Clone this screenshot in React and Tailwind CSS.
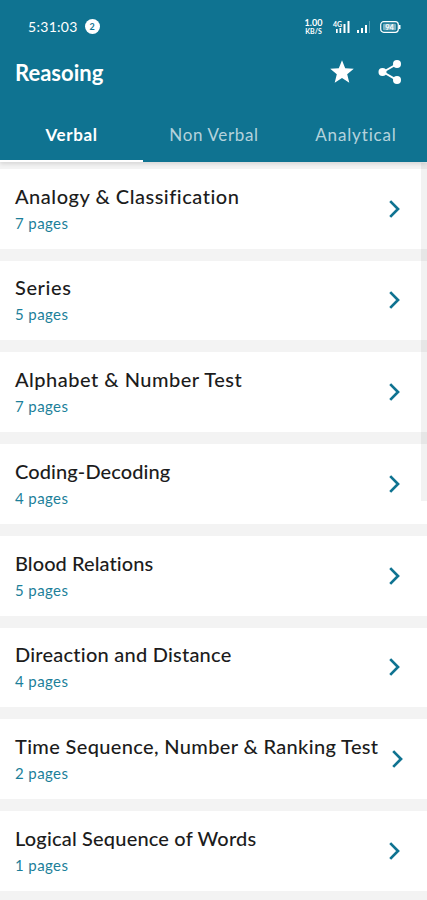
import React, { useState } from 'react';

const tabs = [
  { label: 'Verbal', tracking: 'tracking-[0.6px]' },
  { label: 'Non Verbal', tracking: 'tracking-[0.65px]' },
  { label: 'Analytical', tracking: 'tracking-[0.85px]' },
];

const topics = [
  { title: 'Analogy & Classification', pages: 7, tracking: 'tracking-[0.52px]' },
  { title: 'Series', pages: 5, tracking: 'tracking-[0.6px]' },
  { title: 'Alphabet & Number Test', pages: 7, tracking: 'tracking-[0.5px]' },
  { title: 'Coding-Decoding', pages: 4, tracking: 'tracking-[0.1px]' },
  { title: 'Blood Relations', pages: 5, tracking: 'tracking-[0.07px]' },
  { title: 'Direaction and Distance', pages: 4, tracking: 'tracking-[0.23px]' },
  { title: 'Time Sequence, Number & Ranking Test', pages: 2, tracking: 'tracking-[0.35px]' },
  { title: 'Logical Sequence of Words', pages: 1, tracking: 'tracking-[0.18px]' },
];

const StatusBar = () => (
  <div className="flex h-[48px] items-center pt-[5px] pl-[28px] pr-[26px]">
    <span className="text-[14px] leading-none tracking-[0.3px]">5:31:03</span>
    <span className="ml-[7px] flex h-[15px] w-[15px] items-center justify-center rounded-full bg-white text-[9px] font-bold leading-none text-[#0f7391]">
      2
    </span>
    <div className="ml-auto flex items-center">
      <div className="flex w-[19px] flex-col items-center font-bold">
        <span className="text-[9px] leading-[9px]">1.00</span>
        <span className="text-[7px] leading-[9px]">KB/S</span>
      </div>
      <svg className="ml-[9px]" width="20" height="14" viewBox="0 0 20 14" fill="currentColor">
        <text x="1" y="6.5" fontSize="7" fontWeight="700">4G</text>
        <rect x="4" y="9" width="1.7" height="4" />
        <rect x="7.5" y="8" width="1.7" height="5" />
        <rect x="11.5" y="4" width="2" height="9" />
        <rect x="15.5" y="1" width="2" height="12" />
      </svg>
      <svg className="ml-[5px]" width="16" height="14" viewBox="0 0 16 14" fill="currentColor">
        <rect x="0" y="10" width="2" height="3" />
        <rect x="4" y="8" width="2" height="5" />
        <rect x="8" y="5" width="2" height="8" />
        <rect x="12" y="1" width="1" height="12" opacity="0.3" />
      </svg>
      <svg className="ml-[7px]" width="21" height="12" viewBox="0 0 21 12">
        <rect x="0.7" y="0.7" width="17.6" height="10.6" rx="3" fill="none" stroke="currentColor" strokeWidth="1.2" />
        <rect x="3" y="2.8" width="13" height="6.4" rx="1" fill="currentColor" opacity="0.45" />
        <path d="M19 4v4h1.5V4z" fill="currentColor" />
        <text x="9.5" y="8.7" textAnchor="middle" fontSize="7.5" fontWeight="700" fill="currentColor">94</text>
      </svg>
    </div>
  </div>
);

const Chevron = () => (
  <svg className="shrink-0" width="12" height="20" viewBox="0 0 12 20" fill="none" stroke="#0f7391" strokeWidth="2.7">
    <path d="M2.2 2.1 10 10l-7.8 7.9" />
  </svg>
);

const App = () => {
  const [active, setActive] = useState(0);

  return (
    <div className="relative flex h-[900px] w-full flex-col overflow-hidden bg-[#f3f3f3] font-['Lato','Open_Sans',sans-serif]">
      <header className="z-10 h-[162px] shrink-0 bg-[#0f7391] text-white shadow-[0_2px_4px_rgba(0,0,0,0.12)]">
        <StatusBar />
        <div className="flex h-[48px] items-center pl-[15px] pr-[25px]">
          <h1 className="pt-[2px] text-[22px] font-bold leading-none">Reasoing</h1>
          <button className="ml-auto" title="Favourites">
            <svg width="24" height="24" viewBox="0 0 24 24" fill="currentColor">
              <path d="m12 .2 3.2 8 8.6.6-6.6 5.5 2.1 8.4-7.3-4.6-7.3 4.6 2.1-8.4L.2 8.8l8.6-.6z" />
            </svg>
          </button>
          <button className="ml-[24px]" title="Share">
            <svg width="24" height="24" viewBox="0 0 24 24" fill="currentColor">
              <path d="M5 12 19 4M5 12l14 8.2" fill="none" stroke="currentColor" strokeWidth="2" />
              <circle cx="4.5" cy="12" r="4" />
              <circle cx="19" cy="4" r="4" />
              <circle cx="19" cy="20" r="4" />
            </svg>
          </button>
        </div>
        <nav className="grid h-[66px] grid-cols-[143px_1fr_1fr]">
          {tabs.map((tab, i) => (
            <button
              key={tab.label}
              onClick={() => setActive(i)}
              className={`border-b-2 pt-[12px] text-[17px] leading-none ${tab.tracking} ${active === i ? 'border-white font-bold text-white' : 'border-transparent text-white/70'}`}
            >
              {tab.label}
            </button>
          ))}
        </nav>
      </header>

      <main className="flex flex-col gap-[12px] pt-[6.8px]">
        {topics.map((topic) => (
          <div key={topic.title} className="flex h-[79.75px] shrink-0 items-center bg-white pl-[15px]">
            <div className="flex min-w-[373px] shrink-0 flex-col pr-[13px]">
              <span className={`whitespace-nowrap text-[20px] font-medium leading-[24px] text-[#1c1c1c] ${topic.tracking}`}>{topic.title}</span>
              <span className="mt-[4px] text-[15px] leading-[22px] tracking-[0.4px] text-[#1c7f9a]">{topic.pages} pages</span>
            </div>
            <Chevron />
          </div>
        ))}
      </main>

      {/* scroll thumb */}
      <div className="absolute right-0 top-[163px] h-[338px] w-[6px] bg-black/5" />
    </div>
  );
};

export default App;
